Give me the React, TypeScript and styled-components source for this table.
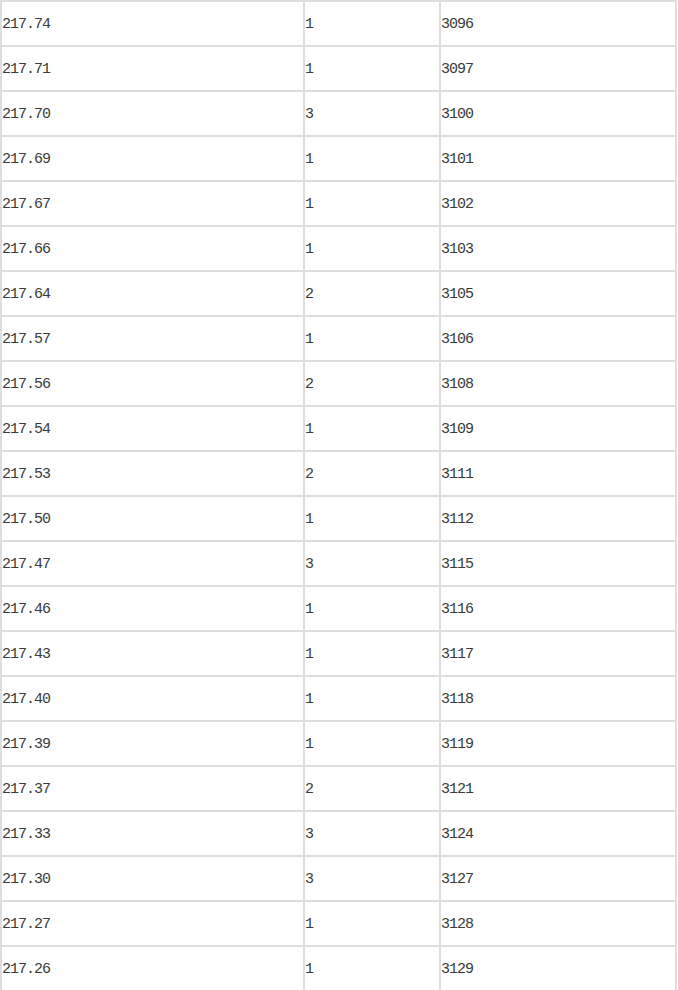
import React from 'react'
import styled, { createGlobalStyle } from 'styled-components'

const GlobalStyle = createGlobalStyle`
  html, body {
    margin: 0;
    padding: 0;
    background: #ffffff;
  }
`

const Table = styled.table`
  width: 677px;
  border: 1px solid #dddddd;
  border-collapse: separate;
  border-spacing: 0;
  font-family: "Liberation Mono", "DejaVu Sans Mono", monospace;
  font-size: 15px;
  letter-spacing: -1px;
  color: #3a3a3a;
  table-layout: fixed;
`

const Cell = styled.td<{ $w: number }>`
  width: ${({ $w }) => $w}px;
  height: 42px;
  padding: 1px 0 0 0;
  border: 1px solid #dddddd;
  vertical-align: middle;
  text-align: left;
  box-sizing: content-box;
`

const rows: [string, number, number][] = [
  ['217.74', 1, 3096],
  ['217.71', 1, 3097],
  ['217.70', 3, 3100],
  ['217.69', 1, 3101],
  ['217.67', 1, 3102],
  ['217.66', 1, 3103],
  ['217.64', 2, 3105],
  ['217.57', 1, 3106],
  ['217.56', 2, 3108],
  ['217.54', 1, 3109],
  ['217.53', 2, 3111],
  ['217.50', 1, 3112],
  ['217.47', 3, 3115],
  ['217.46', 1, 3116],
  ['217.43', 1, 3117],
  ['217.40', 1, 3118],
  ['217.39', 1, 3119],
  ['217.37', 2, 3121],
  ['217.33', 3, 3124],
  ['217.30', 3, 3127],
  ['217.27', 1, 3128],
  ['217.26', 1, 3129],
]

const App = () => {
  return (
    <>
      <GlobalStyle />
      <Table>
        <tbody>
          {rows.map(([price, vol, total]) => (
            <tr key={price}>
              <Cell $w={301}>{price}</Cell>
              <Cell $w={134}>{vol}</Cell>
              <Cell $w={234}>{total}</Cell>
            </tr>
          ))}
        </tbody>
      </Table>
    </>
  )
}

export default App
